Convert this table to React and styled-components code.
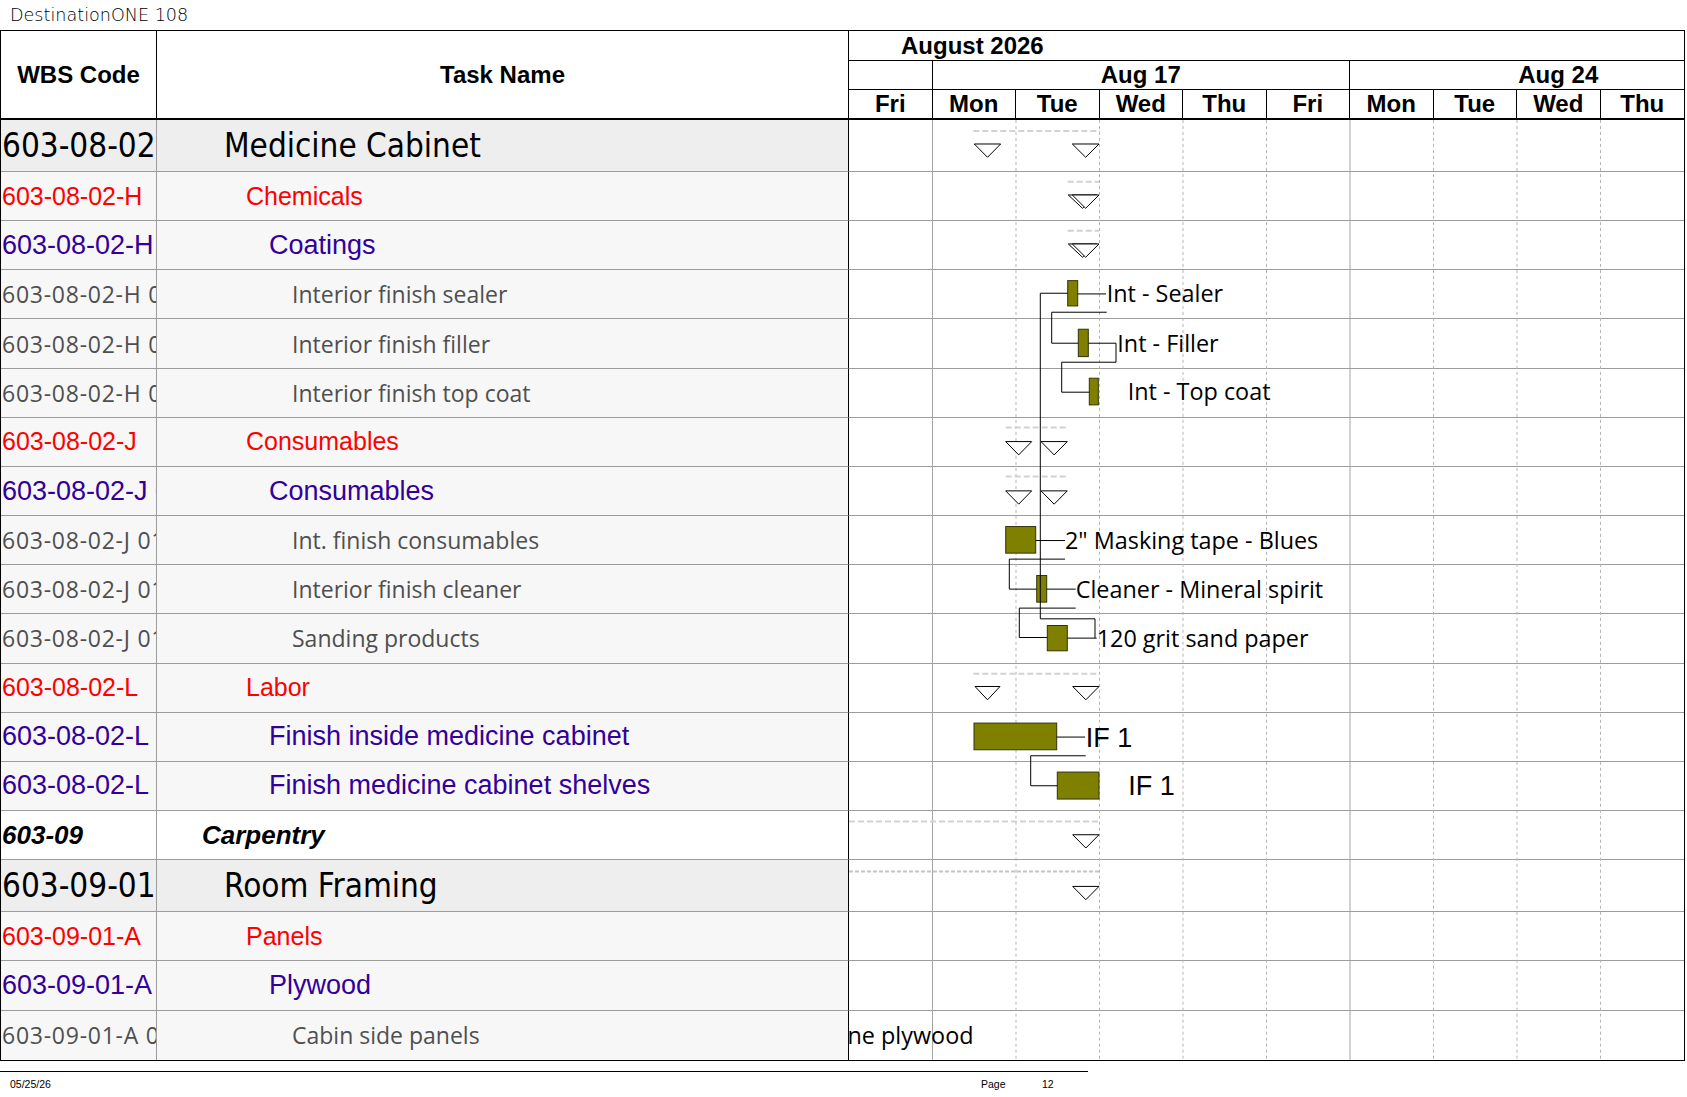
import React from 'react';
import styled, { createGlobalStyle, css } from 'styled-components';

const GlobalStyle = createGlobalStyle`
  html, body { margin: 0; padding: 0; background: #fff; }
  #root { width: 1687px; }
`;

const DAY = 83.5;
const CHART_W = 835;
const LINE = '#9c9c9c';

const Page = styled.div`
  width: 1687px;
  height: 1097px;
  overflow: hidden;
  background: #fff;
`;

const Title = styled.div`
  height: 30px;
  line-height: 30px;
  padding-left: 10px;
  font-family: "DejaVu Sans", sans-serif;
  font-weight: 300;
  font-size: 17.6px;
  color: #000;
`;

const Sheet = styled.div`
  width: 1685px;
  box-sizing: border-box;
  border: 1px solid #000;
`;

const HeaderRow = styled.div`
  display: grid;
  grid-template-columns: 156px 692px ${CHART_W}px;
  height: 89px;
`;

const boldHead = css`
  font-family: "Liberation Sans", Arial, sans-serif;
  font-weight: bold;
  font-size: 24px;
  color: #000;
`;

const ColumnHead = styled.div`
  ${boldHead}
  box-sizing: border-box;
  border-right: 1px solid #000;
  border-bottom: 2px solid #000;
  display: flex;
  align-items: center;
  justify-content: center;
`;

const Timescale = styled.div`
  display: flex;
  flex-direction: column;
  overflow: hidden;
`;

const MonthRow = styled.div`
  ${boldHead}
  box-sizing: border-box;
  height: 30px;
  border-bottom: 1px solid #000;
  padding-left: 52px;
  display: flex;
  align-items: center;
`;

const WeekRow = styled.div`
  box-sizing: border-box;
  height: 29px;
  border-bottom: 1px solid #000;
  display: flex;
  overflow: hidden;
`;

const WeekCell = styled.div`
  ${boldHead}
  flex: 0 0 ${(p) => p.$w}px;
  box-sizing: border-box;
  border-right: 1px solid #000;
  display: flex;
  align-items: center;
  justify-content: center;
  line-height: 1;
`;

const DayRow = styled.div`
  box-sizing: border-box;
  height: 30px;
  border-bottom: 2px solid #000;
  display: flex;
`;

const DayCell = styled.div`
  ${boldHead}
  flex: 0 0 ${DAY}px;
  box-sizing: border-box;
  border-right: ${(p) => (p.$last ? 'none' : '1px solid #000')};
  display: flex;
  align-items: center;
  justify-content: center;
  line-height: 1;
`;

const Body = styled.div`
  position: relative;
`;

const rowBg = { 0: '#ffffff', 1: '#eeeeee', 2: '#f7f7f7', 3: '#f7f7f7', 4: '#f7f7f7' };

const levelFont = {
  0: css`
    font-family: "Liberation Sans", Arial, sans-serif;
    font-weight: bold;
    font-style: italic;
    font-size: 26px;
    color: #000;
  `,
  1: css`
    font-family: "DejaVu Sans Condensed", "DejaVu Sans", sans-serif;
    font-stretch: condensed;
    font-size: 33px;
    color: #000;
  `,
  2: css`
    font-family: "Liberation Sans", Arial, sans-serif;
    font-size: 25px;
    color: #ff0000;
  `,
  3: css`
    font-family: "Liberation Sans", Arial, sans-serif;
    font-size: 27px;
    color: #330099;
  `,
  4: css`
    font-family: "Open Sans", sans-serif;
    font-size: 23px;
    color: #4f4f4f;
  `,
};

const indent = { 0: 45, 1: 67, 2: 89, 3: 112, 4: 135 };

const Row = styled.div`
  display: grid;
  grid-template-columns: 156px 692px ${CHART_W}px;
  height: ${(p) => p.$h}px;
  background: ${(p) => rowBg[p.$level]};
  ${(p) => levelFont[p.$level]}
`;

const cellBase = css`
  box-sizing: border-box;
  border-bottom: ${(p) => (p.$last ? 'none' : `1px solid ${LINE}`)};
  display: flex;
  align-items: center;
  overflow: hidden;
  white-space: nowrap;
`;

const WbsCell = styled.div`
  ${cellBase}
  border-right: 1px solid ${LINE};
  padding-left: 1px;
  letter-spacing: ${(p) => (p.$level === 4 ? '0.75px' : '0')};
`;

const TaskCell = styled.div`
  ${cellBase}
  border-right: 1px solid #000;
  padding-left: ${(p) => indent[p.$level]}px;
`;

const ChartCell = styled.div`
  ${cellBase}
  background: #fff;
`;

const Overlay = styled.svg`
  position: absolute;
  left: 848px;
  top: 0;
  width: ${CHART_W}px;
  height: 100%;
  overflow: hidden;
  pointer-events: none;
`;

const GridLine = styled.line`
  stroke: ${(p) => (p.$solid ? '#a4a4a4' : '#b4b4b4')};
  stroke-width: 1;
  stroke-dasharray: ${(p) => (p.$solid ? 'none' : '3 3')};
`;

const SummaryLine = styled.line`
  stroke: ${(p) => (p.$dark ? '#c4c4c4' : '#d2d2d2')};
  stroke-width: 2;
  stroke-dasharray: ${(p) => (p.$dark ? '4 2' : '6 3')};
`;

const Milestone = styled.polygon`
  fill: #fff;
  stroke: #000;
  stroke-width: 1;
`;

const Bar = styled.rect`
  fill: #808000;
  stroke: #33330a;
  stroke-width: 1;
`;

const Link = styled.polyline`
  fill: none;
  stroke: #000;
  stroke-width: 1;
`;

const BarLabel = styled.text`
  font-family: ${(p) => (p.$arial ? '"Liberation Sans", Arial, sans-serif' : '"Open Sans", sans-serif')};
  font-size: ${(p) => (p.$arial ? 27 : 23.4)}px;
  fill: #000;
`;

const Footer = styled.footer`
  margin-top: 10px;
  width: 1088px;
  border-top: 1px solid #000;
  padding-top: 6px;
  display: grid;
  grid-template-columns: 981px 61px 1fr;
  font-family: "Liberation Sans", Arial, sans-serif;
  font-size: 10.5px;
  color: #000;
`;

const FooterDate = styled.span`
  padding-left: 10px;
`;

const rows = [
  { wbs: '603-08-02', name: 'Medicine Cabinet', level: 1, h: 52 },
  { wbs: '603-08-02-H', name: 'Chemicals', level: 2 },
  { wbs: '603-08-02-H', name: 'Coatings', level: 3 },
  { wbs: '603-08-02-H 010', name: 'Interior finish sealer', level: 4 },
  { wbs: '603-08-02-H 020', name: 'Interior finish filler', level: 4 },
  { wbs: '603-08-02-H 030', name: 'Interior finish top coat', level: 4 },
  { wbs: '603-08-02-J', name: 'Consumables', level: 2 },
  { wbs: '603-08-02-J 01', name: 'Consumables', level: 3 },
  { wbs: '603-08-02-J 01 010', name: 'Int. finish consumables', level: 4 },
  { wbs: '603-08-02-J 01 020', name: 'Interior finish cleaner', level: 4 },
  { wbs: '603-08-02-J 01 030', name: 'Sanding products', level: 4 },
  { wbs: '603-08-02-L', name: 'Labor', level: 2 },
  { wbs: '603-08-02-L', name: 'Finish inside medicine cabinet', level: 3 },
  { wbs: '603-08-02-L', name: 'Finish medicine cabinet shelves', level: 3 },
  { wbs: '603-09', name: 'Carpentry', level: 0 },
  { wbs: '603-09-01', name: 'Room Framing', level: 1, h: 52 },
  { wbs: '603-09-01-A', name: 'Panels', level: 2 },
  { wbs: '603-09-01-A', name: 'Plywood', level: 3 },
  { wbs: '603-09-01-A 010', name: 'Cabin side panels', level: 4 },
];

const days = ['Fri', 'Mon', 'Tue', 'Wed', 'Thu', 'Fri', 'Mon', 'Tue', 'Wed', 'Thu'];

const tri = (l, r, t, b) => `${l},${t} ${r},${t} ${(l + r) / 2},${b}`;

const summaries = [
  { y: 11, x1: 124.3, x2: 251, tris: [[125.3, 151.7], [223.3, 250]], t: 24 },
  { y: 61.7, x1: 218.7, x2: 250, tris: [[219.3, 247.7], [223.3, 250]], t: 75 },
  { y: 110.7, x1: 218.7, x2: 250, tris: [[219.3, 247.7], [223.3, 250]], t: 124 },
  { y: 307.7, x1: 156.7, x2: 219.3, tris: [[156.7, 182.7], [192, 218.3]], t: 321.7 },
  { y: 356.7, x1: 156.7, x2: 219.3, tris: [[156.7, 182.7], [192, 218.3]], t: 371 },
  { y: 554, x1: 124.3, x2: 250, tris: [[126, 151], [223.7, 250]], t: 566.7 },
  { y: 701.7, x1: 0, x2: 250, tris: [[223.7, 250]], t: 715 },
  { y: 751.7, x1: 0, x2: 250, tris: [[223.7, 250]], t: 766.7, dark: true },
];

const bars = [
  { x: 218.7, y: 160.7, w: 10, h: 25.3 },
  { x: 229.3, y: 209.3, w: 10, h: 27.4 },
  { x: 240.3, y: 258.3, w: 9, h: 26.7 },
  { x: 156.7, y: 406.7, w: 30, h: 26.6 },
  { x: 187.7, y: 455.7, w: 10, h: 26.6 },
  { x: 198.3, y: 505.7, w: 20, h: 25.3 },
  { x: 125, y: 603.3, w: 82.7, h: 26.7 },
  { x: 208.3, y: 652.3, w: 41.7, h: 27 },
];

const links = [
  '228.7,174 257,174',
  '239.3,223.3 267,223.3',
  '186.7,420.7 216,420.7',
  '197.7,469.3 226.7,469.3',
  '218.3,518.3 247.7,518.3',
  '207.7,617.3 236,617.3',
  '218.7,173.3 191.3,173.3 191.3,499 246,499 246,518.3',
  '257.7,192.3 202.7,192.3 202.7,223.3 229.3,223.3',
  '267,223.3 267,242.3 212.7,242.3 212.7,272.3 240.3,272.3',
  '216,439.3 160.3,439.3 160.3,469.3 187.7,469.3',
  '226.7,488.3 170.3,488.3 170.3,517.7 198.3,517.7',
  '236.7,636 181.7,636 181.7,666 208.3,666',
];

const labels = [
  { x: 257.7, y: 182.5, text: 'Int - Sealer' },
  { x: 268.3, y: 231.8, text: 'Int - Filler' },
  { x: 278.7, y: 280.5, text: 'Int - Top coat' },
  { x: 216, y: 429.2, text: '2" Masking tape - Blues' },
  { x: 226.7, y: 477.8, text: 'Cleaner - Mineral spirit' },
  { x: 247.7, y: 526.8, text: '120 grit sand paper' },
  { x: 236.7, y: 627, text: 'IF 1', arial: true },
  { x: 279.3, y: 675.7, text: 'IF 1', arial: true },
  { x: 124.5, y: 924.5, text: 'Marine plywood', end: true },
];

function GanttOverlay() {
  const grid = [];
  for (let k = 1; k < 10; k++) {
    const x = k * DAY;
    grid.push(<GridLine key={k} x1={x} x2={x} y1={0} y2={940} $solid={k === 1 || k === 6} />);
  }
  return (
    <Overlay viewBox={`0 0 ${CHART_W} 940`} preserveAspectRatio="none">
      {grid}
      {summaries.map((s, i) => (
        <g key={`s${i}`}>
          <SummaryLine x1={s.x1} x2={s.x2} y1={s.y} y2={s.y} $dark={s.dark} />
          {s.tris.map(([l, r], j) => (
            <Milestone key={j} points={tri(l, r, s.t, s.t + 13.3)} />
          ))}
        </g>
      ))}
      {bars.map((b, i) => (
        <Bar key={`b${i}`} x={b.x} y={b.y} width={b.w} height={b.h} />
      ))}
      {links.map((p, i) => (
        <Link key={`l${i}`} points={p} />
      ))}
      {labels.map((l, i) => (
        <BarLabel key={`t${i}`} x={l.x} y={l.y} $arial={l.arial} textAnchor={l.end ? 'end' : 'start'}>
          {l.text}
        </BarLabel>
      ))}
    </Overlay>
  );
}

export default function App() {
  return (
    <Page>
      <GlobalStyle />
      <Title>DestinationONE 108</Title>
      <Sheet>
        <HeaderRow>
          <ColumnHead>WBS Code</ColumnHead>
          <ColumnHead>Task Name</ColumnHead>
          <Timescale>
            <MonthRow>August 2026</MonthRow>
            <WeekRow>
              <WeekCell $w={DAY} />
              <WeekCell $w={DAY * 5}>Aug 17</WeekCell>
              <WeekCell $w={DAY * 5}>Aug 24</WeekCell>
            </WeekRow>
            <DayRow>
              {days.map((d, i) => (
                <DayCell key={i} $last={i === days.length - 1}>{d}</DayCell>
              ))}
            </DayRow>
          </Timescale>
        </HeaderRow>
        <Body>
          {rows.map((r, i) => {
            const last = i === rows.length - 1;
            return (
              <Row key={i} $level={r.level} $h={r.h || 49.17}>
                <WbsCell $last={last} $level={r.level}>{r.wbs}</WbsCell>
                <TaskCell $last={last} $level={r.level}>{r.name}</TaskCell>
                <ChartCell $last={last} />
              </Row>
            );
          })}
          <GanttOverlay />
        </Body>
      </Sheet>
      <Footer>
        <FooterDate>05/25/26</FooterDate>
        <span>Page</span>
        <span>12</span>
      </Footer>
    </Page>
  );
}
